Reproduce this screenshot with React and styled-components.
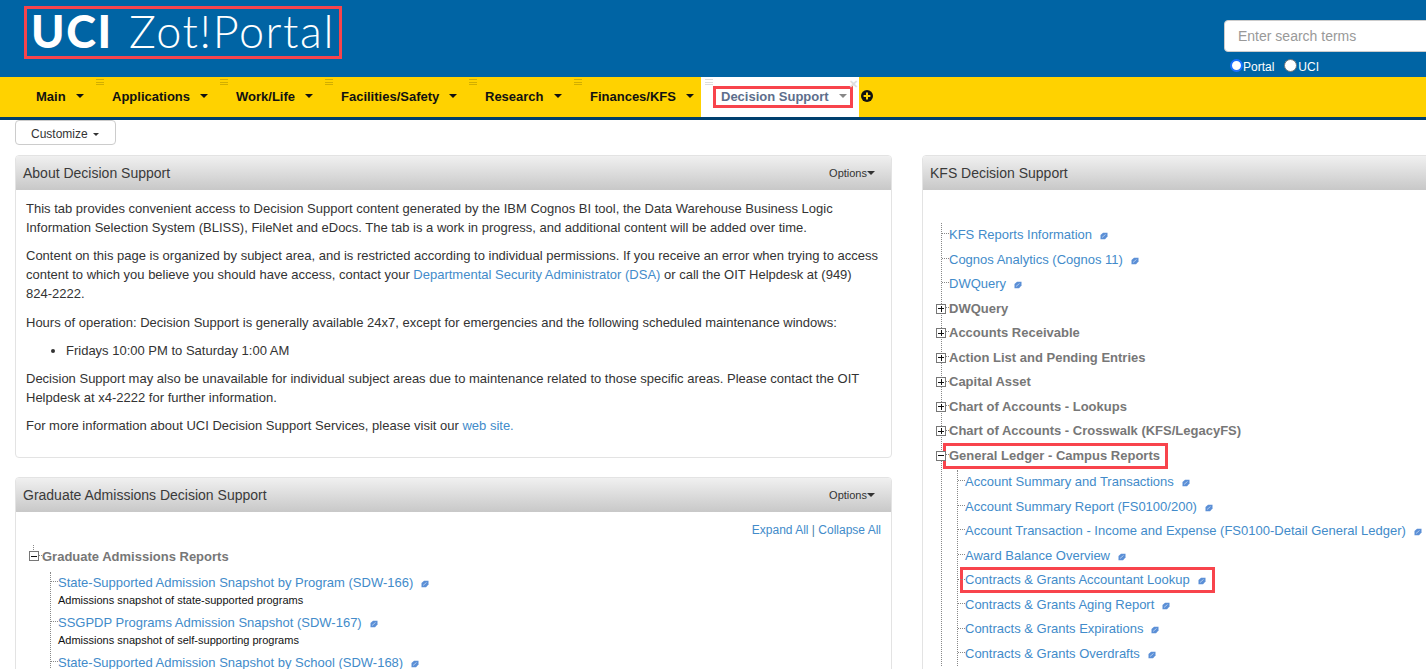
import React from "react";
import styled, { createGlobalStyle } from "styled-components";

const Global = createGlobalStyle`
  html, body { margin: 0; padding: 0; background: #fff; overflow: hidden; height: 669px; }
  body { font-family: "Liberation Sans", Arial, sans-serif; font-size: 13px; color: #333; }
  * { box-sizing: border-box; }
`;

const Page = styled.div`width: 1426px; height: 669px; overflow: hidden;`;
const Header = styled.header`
  height: 77px; background: #0064a4; display: flex; justify-content: space-between; padding: 6px 0 0 24px;
`;
const Logo = styled.div`
  width: 318px; height: 53px; border: 3px solid #f8444c; display: flex; align-items: center;
  padding: 0 0 2px 4px; color: #fff; font-family: Lato, sans-serif; white-space: nowrap; line-height: 1;
`;
const LogoMark = styled.span`font-size: 45px; font-weight: 900; letter-spacing: 1.6px; width: 98px;`;
const LogoName = styled.span`font-size: 45px; font-weight: 300; letter-spacing: 1.6px;`;
const Search = styled.div`width: 202px; padding-top: 14px; overflow: hidden; flex: none;`;
const SearchInput = styled.input`
  width: 260px; height: 32px; border: 1px solid #ccc; border-radius: 4px; background: #fff; padding: 0 13px;
  font: 14px "Liberation Sans", Arial, sans-serif; display: block;
  &::placeholder { color: #999; opacity: 1; }
`;
const Scope = styled.div`display: flex; align-items: center; margin-top: 7px; padding-left: 6px; height: 16px;`;
const ScopeOption = styled.label`
  display: flex; align-items: center; color: #fff; font-size: 12px; margin-right: ${p => p.$gap}px; line-height: 16px;
`;
const Radio = styled.span`
  width: 13px; height: 13px; border-radius: 50%; background: #fff; flex: none; margin: -4px ${p => (p.$on ? 0 : 1)}px 0 0;
  border: ${p => (p.$on ? "2px solid #1a6fff" : "1px solid #777")};
`;

const Nav = styled.nav`
  height: 43px; background: #ffd200; border-bottom: 3px solid #003f6e; display: flex; padding-left: 16px;
`;
const Tab = styled.div`
  position: relative; height: 40px; display: flex; align-items: center; flex: none;
  width: ${p => p.$w}px;
  padding: 0 0 ${p => (p.$active ? 0 : 2)}px 20px;
  font-weight: 700; font-size: 13px; color: #111; white-space: nowrap;
  background: ${p => (p.$active ? "#fff" : "transparent")};
`;
const Grip = styled.span`
  position: absolute; left: 4px; top: 2px; width: 8px; height: 6px;
  border-top: 1px solid ${p => (p.$active ? "#ddd" : "#d2ae00")};
  border-bottom: 1px solid ${p => (p.$active ? "#ddd" : "#d2ae00")};
  &::after { content: ""; position: absolute; left: 0; right: 0; top: 1.5px; height: 1px; background: ${p => (p.$active ? "#ddd" : "#d2ae00")}; }
`;
const Caret = styled.span`
  display: inline-block; flex: none; width: 0; height: 0; margin-left: ${p => p.$gap ?? 10}px;
  border-left: ${p => p.$s ?? 4}px solid transparent; border-right: ${p => p.$s ?? 4}px solid transparent;
  border-top: ${p => p.$s ?? 4}px solid ${p => p.$c ?? "#111"};
`;
const ActiveLabel = styled.span`
  display: flex; align-items: center; position: relative; color: #5d6e8c; height: 22px;
  width: 140px; margin-left: -8px; padding: 0 0 2px 8px; outline: 3px solid #f8444c; outline-offset: -3px;
`;
const TabClose = styled.span`
  position: absolute; left: 148px; top: 3px; color: #ddd; font-size: 11px; line-height: 8px; font-weight: 700;
`;
const AddTab = styled.span`
  width: 12px; height: 12px; margin: 13px 0 0 2px; display: block; flex: none;
`;

const Toolbar = styled.div`padding: 0 0 0 15px; height: 35px;`;
const CustomizeButton = styled.button`
  width: 101px; height: 25px; border: 1px solid #ccc; border-radius: 4px; background: #fff;
  font: 12px "Liberation Sans", Arial, sans-serif; color: #333; display: flex; align-items: center; padding: 3px 0 0 15px;
  margin: 0;
`;

const Columns = styled.main`display: flex; gap: 30px; padding-left: 15px; width: 1830px; align-items: flex-start;`;
const Column = styled.div`width: 877px; flex: none; display: flex; flex-direction: column; gap: 19px;`;
const Panel = styled.section`
  border: 1px solid #e3e3e3; border-radius: 4px; background: #fff; height: ${p => (p.$h ? `${p.$h}px` : "auto")};
`;
const PanelHead = styled.div`
  height: 34px; background: linear-gradient(#f0f0f0, #c8c8c8); border-radius: 3px 3px 0 0; margin: 0;
  display: flex; align-items: center; justify-content: space-between; padding: 0 16px 0 7px;
  font-size: 14px; color: #3a3a3a;
`;
const Options = styled.span`display: flex; align-items: center; font-size: 11px; color: #333;`;
const PanelBody = styled.div`padding: ${p => p.$pad};`;
const Para = styled.p`margin: 0 0 9px; line-height: 19.2px;`;
const Bullets = styled.ul`margin: 0 0 9px; padding-left: 40px; line-height: 19.2px;`;
const Link = styled.a`color: #428bca; text-decoration: none;`;
const ExpandBar = styled.div`text-align: right; font-size: 12px; padding: 0 10px 0 0; height: 18px; line-height: 18px; color: #4a7fa8; margin-bottom: 6px;`;

const TreeList = styled.ul`
  list-style: none; margin: ${p => p.$top ?? 0}px 0 0 ${p => p.$indent}px; padding: 0;
  border-left: 1px dotted ${p => (p.$plain ? "transparent" : "#888")};
  font-size: 13px;
`;
const Row = styled.li`position: relative;`;
const RowLine = styled.div`
  position: relative; height: ${p => p.$h ?? 24.55}px; line-height: ${p => p.$h ?? 24.55}px; padding-left: 7px; white-space: nowrap;
  &::before { content: ""; position: absolute; left: 0; top: ${p => (p.$h ?? 24.55) / 2 - 2}px; width: 7px; border-top: 1px dotted #888; }
`;
const Expander = styled.span`
  position: absolute; left: -6px; top: ${p => p.$top ?? 7}px; width: 10px; height: 10px; border: 1px solid #777; background: #fff;
  display: flex; align-items: center; justify-content: center; z-index: 1;
  &::before { content: ""; width: 6px; height: 1px; background: #111; position: absolute; }
  &::after { content: ""; display: ${p => (p.$open ? "none" : "block")}; width: 1px; height: 6px; background: #111; position: absolute; }
`;
const Stub = styled.span`position: absolute; left: -2px; top: 0; height: 5px; border-left: 1px dotted #888;`;
const Group = styled.span`font-weight: 700; color: #777;`;
const Desc = styled.div`font-size: 11px; color: #111; padding-left: 7px; line-height: 12px; height: 18px;`;
const Marked = styled.span`
  display: inline-block; line-height: 20px; outline: 3px solid #f8444c; outline-offset: 0; padding: 0 ${p => p.$r}px 0 ${p => p.$l}px; margin-left: -${p => p.$l}px;
`;
const ExtSvg = styled.svg`width: 8px; height: 8px; margin-left: ${p => p.$gap ?? 8}px; vertical-align: -1px;`;

const Ext = ({ gap }) => (
  <ExtSvg viewBox="0 0 8 8" $gap={gap}>
    <path d="M0.5 3 L3 0.8 H7.5 V4.6 L5 7.2 H0.5 Z" fill="#5b8fd6" />
    <path d="M2 5.5 L5.5 2.5" stroke="#b9d0f0" strokeWidth="0.9" />
  </ExtSvg>
);

const tabs = [
  ["Main", 76], ["Applications", 124], ["Work/Life", 105], ["Facilities/Safety", 144], ["Research", 105], ["Finances/KFS", 131],
];
const topLinks = ["KFS Reports Information", "Cognos Analytics (Cognos 11)", "DWQuery"];
const groups = ["DWQuery", "Accounts Receivable", "Action List and Pending Entries", "Capital Asset", "Chart of Accounts - Lookups", "Chart of Accounts - Crosswalk (KFS/LegacyFS)"];
const ledgerBefore = ["Account Summary and Transactions", "Account Summary Report (FS0100/200)", "Account Transaction - Income and Expense (FS0100-Detail General Ledger)", "Award Balance Overview"];
const ledgerAfter = ["Contracts & Grants Aging Report", "Contracts & Grants Expirations", "Contracts & Grants Overdrafts"];
const admissions = [
  ["State-Supported Admission Snapshot by Program (SDW-166)", "Admissions snapshot of state-supported programs"],
  ["SSGPDP Programs Admission Snapshot (SDW-167)", "Admissions snapshot of self-supporting programs"],
  ["State-Supported Admission Snapshot by School (SDW-168)", ""],
];

const LinkRow = ({ label }) => (
  <Row><RowLine><Link>{label}</Link><Ext /></RowLine></Row>
);

export default function App() {
  return (
    <Page>
      <Global />
      <Header>
        <Logo><LogoMark>UCI</LogoMark><LogoName>Zot!Portal</LogoName></Logo>
        <Search>
          <SearchInput placeholder="Enter search terms" readOnly />
          <Scope>
            <ScopeOption $gap={10}><Radio $on />Portal</ScopeOption>
            <ScopeOption $gap={0}><Radio />UCI</ScopeOption>
          </Scope>
        </Search>
      </Header>
      <Nav>
        {tabs.map(([t, w], i) => (
          <Tab key={t} $w={w}>{i > 0 && <Grip />}{t}<Caret /></Tab>
        ))}
        <Tab $w={158} $active>
          <Grip $active />
          <ActiveLabel>Decision Support<Caret $c="#888" /></ActiveLabel>
          <TabClose>✕</TabClose>
        </Tab>
        <AddTab>
          <svg width="12" height="12" viewBox="0 0 12 12">
            <circle cx="6" cy="6" r="6" fill="#111" />
            <path d="M6 2.6V9.4M2.6 6H9.4" stroke="#ffd200" strokeWidth="2" />
          </svg>
        </AddTab>
      </Nav>
      <Toolbar>
        <CustomizeButton>Customize<Caret $gap={5} $s={3.5} $c="#333" /></CustomizeButton>
      </Toolbar>
      <Columns>
        <Column>
          <Panel $h={303}>
            <PanelHead>About Decision Support<Options>Options<Caret $gap={0} $c="#333" /></Options></PanelHead>
            <PanelBody $pad="8.5px 10px 0">
              <Para>This tab provides convenient access to Decision Support content generated by the IBM Cognos BI tool, the Data Warehouse Business Logic Information Selection System (BLISS), FileNet and eDocs. The tab is a work in progress, and additional content will be added over time.</Para>
              <Para>Content on this page is organized by subject area, and is restricted according to individual permissions. If you receive an error when trying to access content to which you believe you should have access, contact your <Link>Departmental Security Administrator (DSA)</Link> or call the OIT Helpdesk at (949) 824-2222.</Para>
              <Para>Hours of operation: Decision Support is generally available 24x7, except for emergencies and the following scheduled maintenance windows:</Para>
              <Bullets><li>Fridays 10:00 PM to Saturday 1:00 AM</li></Bullets>
              <Para>Decision Support may also be unavailable for individual subject areas due to maintenance related to those specific areas. Please contact the OIT Helpdesk at x4-2222 for further information.</Para>
              <Para>For more information about UCI Decision Support Services, please visit our <Link>web site.</Link></Para>
            </PanelBody>
          </Panel>
          <Panel>
            <PanelHead>Graduate Admissions Decision Support<Options>Options<Caret $gap={0} $c="#333" /></Options></PanelHead>
            <PanelBody $pad="9px 0 0 0">
              <ExpandBar><Link>Expand All</Link> | <Link>Collapse All</Link></ExpandBar>
              <TreeList $indent={18} $plain>
                <Row>
                  <RowLine><Stub /><Expander $open $top={6} /><Group>Graduate Admissions Reports</Group></RowLine>
                  <TreeList $indent={15} $top={2}>
                    {admissions.map(([t, d]) => (
                      <Row key={t}>
                        <RowLine $h={22}><Link>{t}</Link><Ext /></RowLine>
                        {d && <Desc>{d}</Desc>}
                      </Row>
                    ))}
                  </TreeList>
                </Row>
              </TreeList>
            </PanelBody>
          </Panel>
        </Column>
        <Column>
          <Panel $h={560}>
            <PanelHead>KFS Decision Support</PanelHead>
            <PanelBody $pad="33px 0 0 0">
              <TreeList $indent={18}>
                {topLinks.map(t => <LinkRow key={t} label={t} />)}
                {groups.map(t => (
                  <Row key={t}><RowLine><Expander /><Group>{t}</Group></RowLine></Row>
                ))}
                <Row>
                  <RowLine><Expander $open /><Marked $l={3} $r={5}><Group>General Ledger - Campus Reports</Group></Marked></RowLine>
                  <TreeList $indent={15} $top={1.6}>
                    {ledgerBefore.map(t => <LinkRow key={t} label={t} />)}
                    <Row><RowLine><Marked $l={2} $r={6}><Link>Contracts &amp; Grants Accountant Lookup</Link><Ext /></Marked></RowLine></Row>
                    {ledgerAfter.map(t => <LinkRow key={t} label={t} />)}
                  </TreeList>
                </Row>
              </TreeList>
            </PanelBody>
          </Panel>
        </Column>
      </Columns>
    </Page>
  );
}
